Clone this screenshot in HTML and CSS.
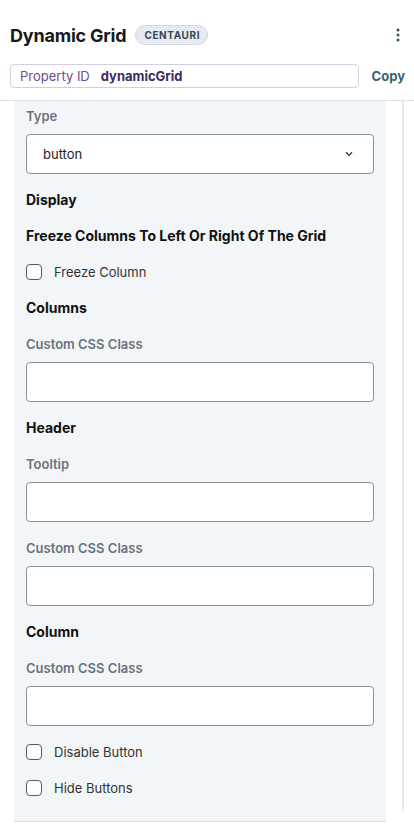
FILE: index.html
```html
<!DOCTYPE html>
<html>
<head>
<meta charset="utf-8">
<link rel="stylesheet" href="styles.css">
</head>
<body>
<div class="app">
  <header class="top">
    <div class="title-row">
      <h1 class="title">Dynamic Grid</h1>
      <span class="badge">CENTAURI</span>
      <span class="spacer"></span>
      <button class="kebab" aria-label="More">
        <svg width="4" height="14" viewBox="0 0 4 14"><circle cx="2" cy="2" r="1.5"/><circle cx="2" cy="7" r="1.5"/><circle cx="2" cy="12" r="1.5"/></svg>
      </button>
    </div>
    <div class="prop-row">
      <div class="prop-box"><span class="prop-key">Property ID</span><span class="prop-val">dynamicGrid</span></div>
      <span class="copy">Copy</span>
    </div>
  </header>
  <div class="body">
    <div class="panel">
      <div class="label">Type</div>
      <div class="select"><span>button</span>
        <svg width="8" height="6" viewBox="0 0 8 6"><path d="M1 1.2 L4 4.4 L7 1.2" fill="none" stroke="#333" stroke-width="1.3"/></svg>
      </div>
      <div class="heading gap16">Display</div>
      <div class="heading gap16">Freeze Columns To Left Or Right Of The Grid</div>
      <label class="check gap16"><span class="box"></span>Freeze Column</label>
      <div class="heading gap16">Columns</div>
      <div class="label gap16">Custom CSS Class</div>
      <div class="input"></div>
      <div class="heading gap16">Header</div>
      <div class="label gap16">Tooltip</div>
      <div class="input"></div>
      <div class="label gap16">Custom CSS Class</div>
      <div class="input"></div>
      <div class="heading gap16">Column</div>
      <div class="label gap16">Custom CSS Class</div>
      <div class="input"></div>
      <label class="check gap16"><span class="box"></span>Disable Button</label>
      <label class="check gap16"><span class="box"></span>Hide Buttons</label>
    </div>
    <div class="track"></div>
  </div>
</div>
</body>
</html>
```
FILE: styles.css
```css
* { box-sizing: border-box; }
html, body { margin: 0; padding: 0; background: #fff; }
body { font-family: Inter, "Noto Sans", sans-serif; color: #111; }
.app { width: 414px; height: 832px; overflow: hidden; }
.top { padding: 18px 9px 0 10px; border-bottom: 1px solid #dfe3e8; height: 101px; }
.title-row { display: flex; align-items: center; height: 34px; }
.title { font-size: 18px; font-weight: 700; margin: 0; letter-spacing: -0.2px; color: #1a1a1a; }
.badge { margin-left: 9px; background: #e6eaf1; border: 1px solid #d3d9e3; border-radius: 10px; font-size: 10px; font-weight: 700; letter-spacing: 0.6px; color: #3b4556; padding: 3px 7px 3px 8px; line-height: 12px; }
.spacer { flex: 1; }
.kebab { background: none; border: 0; padding: 0; width: 10px; display: flex; justify-content: center; margin-right: 2px; }
.kebab svg { fill: #2f5563; }
.prop-row { display: flex; align-items: center; margin-top: 12px; }
.prop-box { width: 350px; height: 24px; border: 1px solid #d7cde3; border-radius: 4px; display: flex; align-items: center; padding-left: 9px; font-size: 13px; }
.prop-key { color: #6d4b97; }
.prop-val { color: #3f2760; font-weight: 700; margin-left: 11px; }
.copy { margin-left: 13px; font-size: 13px; font-weight: 700; color: #3a6370; }
.body { display: flex; }
.panel { width: 372px; margin-left: 14px; background: #f3f6f9; border-bottom: 1px solid #dcdfe4; padding: 5px 12px 23px; display: flex; flex-direction: column; }
.track { width: 2px; margin-left: 16px; height: 710px; background: #e9eaec; }
.label { font-size: 13px; font-weight: 600; color: #6b7280; line-height: 20px; }
.heading { font-size: 14px; font-weight: 700; color: #111; line-height: 20px; }
.gap16 { margin-top: 16px; }
.select, .input { margin-top: 8px; height: 40px; border: 1px solid #8c9199; border-radius: 4px; background: #fff; }
.select { display: flex; align-items: center; justify-content: space-between; padding: 0 20px 0 16px; font-size: 13px; color: #222; }
.check { display: flex; align-items: center; font-size: 13px; color: #333; line-height: 20px; }
.box { width: 16px; height: 16px; border: 1.5px solid #545a63; border-radius: 4px; margin-right: 12px; background: #fff; }
```
